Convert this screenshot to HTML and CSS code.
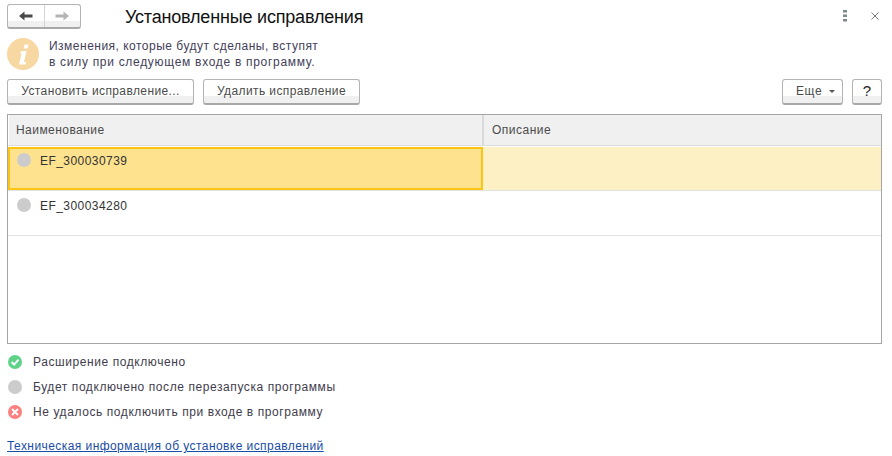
FILE: index.html
```html
<!DOCTYPE html>
<html lang="ru">
<head>
<meta charset="utf-8">
<title>Установленные исправления</title>
<link rel="stylesheet" href="styles.css">
</head>
<body>
<div class="page">
  <header class="head">
    <div class="nav">
      <span class="nav-btn nav-left"><svg width="16" height="12" viewBox="0 0 16 12"><path d="M1 6 6.500 1.500V4.500H14.500V7.500H6.500V10.500Z" fill="#4a4a4a"/></svg></span>
      <span class="nav-btn"><svg width="16" height="12" viewBox="0 0 16 12"><path d="M15 6 9.500 1.500V4.500H1.500V7.500H9.500V10.500Z" fill="#b4b4b4"/></svg></span>
    </div>
    <h1 class="title">Установленные исправления</h1>
    <div class="window-tools">
      <svg class="dots" width="4" height="12" viewBox="0 0 4 12"><path d="M0 0h4v2.500H0zM0 4.500h4v2.500H0zM0 9h4v2.500H0z" fill="#7c8a88"/></svg>
      <svg class="close" width="8" height="8" viewBox="0 0 8 8"><path d="M.5.500l7 7M7.500.500l-7 7" stroke="#7a7a7a" fill="none"/></svg>
    </div>
  </header>
  <div class="notice">
    <svg class="info" width="32" height="32" viewBox="0 0 32 32"><circle cx="16" cy="16" r="16" fill="#f7d7a2"/><path d="M17.500 6.500h4l-.8 4h-4zM14.500 13h5l-2.500 11h2l-.5 2.500h-6.500l2.500-11h-1.500z" fill="#fff"/></svg>
    <p class="notice-text"><span class="notice-line">Изменения, которые будут сделаны, вступят</span><span class="notice-line notice-line-wide">в силу при следующем входе в программу.</span></p>
  </div>
  <div class="toolbar">
    <button class="btn btn-install">Установить исправление...</button>
    <button class="btn btn-remove">Удалить исправление</button>
    <button class="btn btn-more">Еще<i class="caret"></i></button>
    <button class="btn btn-help">?</button>
  </div>
  <div class="table">
    <div class="thead">
      <div class="th th-name">Наименование</div>
      <div class="th th-desc">Описание</div>
    </div>
    <div class="row row-selected">
      <div class="cell cell-name"><i class="dot dot-gray"></i>EF_300030739</div>
      <div class="cell cell-desc"></div>
    </div>
    <div class="row">
      <div class="cell cell-name"><i class="dot dot-gray"></i>EF_300034280</div>
      <div class="cell cell-desc"></div>
    </div>
  </div>
  <ul class="legend">
    <li class="legend-item"><svg class="legend-icon" width="14" height="14" viewBox="0 0 15 15"><circle cx="7.500" cy="7.500" r="7.500" fill="#5fd28a"/><path d="M3.800 7.500 6.500 10.300 11.300 4.900" stroke="#fff" stroke-width="2" fill="none"/></svg>Расширение подключено</li>
    <li class="legend-item"><svg class="legend-icon" width="14" height="14" viewBox="0 0 15 15"><circle cx="7.500" cy="7.500" r="7.500" fill="#cccccc"/></svg>Будет подключено после перезапуска программы</li>
    <li class="legend-item"><svg class="legend-icon" width="14" height="14" viewBox="0 0 15 15"><circle cx="7.500" cy="7.500" r="7.500" fill="#fb8080"/><path d="M4.300 4.300l6.400 6.400M10.700 4.300l-6.400 6.400" stroke="#fff" stroke-width="2" fill="none"/></svg>Не удалось подключить при входе в программу</li>
  </ul>
  <a class="tech-link" href="#">Техническая информация об установке исправлений</a>
</div>
</body>
</html>
```
FILE: styles.css
```css
* { box-sizing: border-box; }
html, body { margin: 0; background: #fff; }
.page {
  width: 892px; height: 456px; overflow: hidden;
  padding: 4px 10px 0 7px;
  font: 12px/16px "Liberation Sans", Arial, sans-serif;
  letter-spacing: .58px;
  color: #4b4b4b;
}
.head { display: flex; align-items: center; height: 26px; }
.nav {
  display: flex; align-self: flex-start; width: 74px; height: 25px;
  border: 1px solid #b4b4b4; border-bottom: 2px solid #a8a8a8; border-radius: 3px;
  background: linear-gradient(#fff 0 16px, #f0f0f0 16px);
}
.nav-btn { flex: 1; display: flex; align-items: center; justify-content: center; }
.nav-left { border-right: 1px solid #d4d4d4; }
.title {
  margin: 0 0 0 44px; flex: 1;
  font-size: 18px; line-height: 26px; font-weight: 400; letter-spacing: -.19px; color: #111;
}
.window-tools { display: flex; align-items: center; gap: 24px; margin: 0 3px 2px 0; }
.notice { display: flex; align-items: center; gap: 10px; margin-top: 8px; height: 32px; }
.info { flex: none; }
.notice-text { margin: 0; color: #44405a; letter-spacing: .49px; }
.notice-line { display: block; }
.notice-line-wide { letter-spacing: .7px; }
.toolbar { display: flex; gap: 9px; margin-top: 9px; height: 26px; }
.btn {
  height: 26px; padding: 0 0 2px; font: inherit; letter-spacing: .4px; color: #4b4b4b;
  border: 1px solid #b4b4b4; border-bottom: 2px solid #a8a8a8; border-radius: 3px;
  background: linear-gradient(#fff 0 16px, #f0f0f0 16px);
}
.btn-install { width: 187px; }
.btn-remove { width: 157px; }
.btn-more { width: 61px; margin-left: auto; text-align: left; padding-left: 13px; letter-spacing: .58px; }
.btn-help { width: 30px; font-size: 15px; color: #222; }
.caret {
  display: inline-block; vertical-align: middle; margin-left: 7px;
  border: 3px solid transparent; border-top-color: #555; border-bottom: 0;
}
.table {
  margin-top: 9px; height: 230px;
  border: 1px solid #a5a5a5; background: #fff;
}
.thead {
  display: flex; height: 31px; background: #f0f0f0;
  border-left: 1px solid #fff; border-bottom: 1px solid #dadada;
}
.th { padding: 7px 8px 0 7px; letter-spacing: .45px; }
.th-name { width: 475px; border-right: 2px solid #dadada; }
.th-desc { flex: 1; padding-left: 8px; letter-spacing: .5px; }
.row { display: flex; height: 45px; border-bottom: 1px solid #e2e2e2; }
.cell { display: flex; }
.cell-name { width: 475px; padding: 7px 0 0 9px; color: #333; letter-spacing: .45px; }
.cell-desc { flex: 1; }
.dot { flex: none; width: 14px; height: 14px; border-radius: 50%; margin-right: 9px; }
.dot-gray { background: #ccc; }
.row-selected { margin-top: 1px; height: 44px; }
.row-selected .cell-name { background: #fee28e; border: 2px solid #fcc514; padding: 4px 0 0 7px; }
.row-selected .cell-desc { background: #fdf0c5; }
.legend { list-style: none; margin: 5px 0 0; padding: 0; }
.legend-item { display: flex; align-items: center; height: 25px; color: #3f3c4e; }
.legend-icon { margin: 0 11px 0 1px; flex: none; }
.tech-link { display: inline-block; margin-top: 14px; color: #1a4da5; text-decoration: underline; letter-spacing: .43px; }
```
